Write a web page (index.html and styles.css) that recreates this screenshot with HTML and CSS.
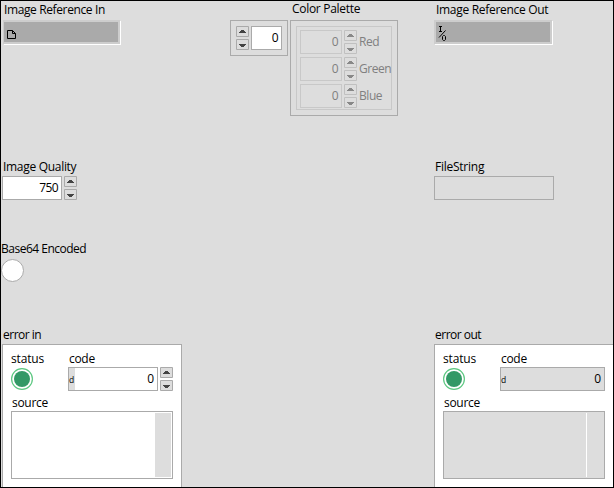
FILE: index.html
```
<!DOCTYPE html>
<html lang="en">
<head>
<meta charset="utf-8">
<title>Front Panel</title>
<link rel="stylesheet" href="styles.css">
</head>
<body>
<svg class="defs" width="0" height="0" aria-hidden="true">
  <symbol id="spin" viewBox="0 0 13 24">
    <path class="key" d="M.5 .5h12v10H.5zM.5 13.5h12v10H.5z"/>
    <path class="arrow" d="M5 4h3v1h1v1h1v1H3V6h1V5h1zM3 18h7v1H9v1H8v1H5v-1H4v-1H3z"/>
  </symbol>
  <symbol id="led" viewBox="0 0 22 22">
    <circle cx="11" cy="11" r="10.4" fill="#fff" stroke="#5cc780" stroke-width="1.2"/>
    <circle cx="11" cy="11" r="8" fill="#339966"/>
  </symbol>
</svg>
<main class="panel">
  <section class="col left">
    <div class="item ref">
      <div class="label l-in">Image Reference In</div>
      <div class="well in"><svg width="10" height="10" viewBox="0 0 10 10"><path d="M.5 .5h5l3 3v5h-8zM5.5 .5v3h3" fill="none" stroke="#000"/></svg></div>
    </div>
    <div class="item mid">
      <div class="label l-quality">Image Quality</div>
      <div class="spinner"><div class="num">750</div><svg class="keys" width="13" height="24"><use href="#spin"/></svg></div>
    </div>
    <div class="item bool">
      <div class="label l-base">Base64 Encoded</div>
      <div class="round"></div>
    </div>
    <div class="item err">
      <div class="label l-ein">error in</div>
      <div class="cluster">
        <div class="heads"><span class="h-status">status</span><span class="h-code">code</span></div>
        <div class="line">
          <svg class="led" width="22" height="22"><use href="#led"/></svg>
          <div class="code"><span class="radix">d</span><span>0</span></div>
          <svg class="keys" width="13" height="24"><use href="#spin"/></svg>
        </div>
        <div class="source-label">source</div>
        <div class="source"><div class="bar"></div></div>
      </div>
    </div>
  </section>
  <section class="col center">
    <div class="label l-palette">Color Palette</div>
    <div class="array">
      <div class="index"><svg class="keys" width="13" height="24"><use href="#spin"/></svg><div class="num">0</div></div>
      <div class="palette">
        <div class="channels">
          <div class="channel"><div class="num">0</div><svg class="keys" width="13" height="24"><use href="#spin"/></svg><span>Red</span></div>
          <div class="channel"><div class="num">0</div><svg class="keys" width="13" height="24"><use href="#spin"/></svg><span>Green</span></div>
          <div class="channel"><div class="num">0</div><svg class="keys" width="13" height="24"><use href="#spin"/></svg><span>Blue</span></div>
        </div>
      </div>
    </div>
  </section>
  <section class="col right">
    <div class="item ref">
      <div class="label l-out">Image Reference Out</div>
      <div class="well out"><svg width="9" height="16" viewBox="0 0 9 16"><path d="M1 .5h3M2.5 .5v5M1 5.5h3M7.5 4.5L1 11.5M5.5 9.5h1l1 1v3l-1 1h-1l-1-1v-3z" fill="none" stroke="#000"/></svg></div>
    </div>
    <div class="item mid">
      <div class="label l-file">FileString</div>
      <div class="string"></div>
    </div>
    <div class="item bool"></div>
    <div class="item err">
      <div class="label l-eout">error out</div>
      <div class="cluster">
        <div class="heads"><span class="h-status">status</span><span class="h-code">code</span></div>
        <div class="line">
          <svg class="led" width="22" height="22"><use href="#led"/></svg>
          <div class="code"><span class="radix">d</span><span>0</span></div>
        </div>
        <div class="source-label">source</div>
        <div class="source"><div class="bar"></div></div>
      </div>
    </div>
  </section>
</main>
</body>
</html>
```
FILE: styles.css
```
* { box-sizing: border-box; }
body { margin: 0; font: 12px/16px "Open Sans", "Noto Sans", sans-serif; color: #000; }
.defs { display: block; }
.panel {
  display: flex;
  width: 614px;
  height: 488px;
  border: 1px solid #000;
  background: #ddd;
  overflow: hidden;
}
.col { flex: none; height: 486px; }
.left { width: 229px; }
.center { width: 204px; }
.right { width: 179px; }
.label, .heads, .source-label, .channel span { white-space: nowrap; }
.label { height: 16px; letter-spacing: -.3px; }

.ref { height: 157px; padding-top: 1px; }
.mid { height: 82px; padding-top: 1px; }
.bool { height: 86px; padding-top: 1px; }
.err { height: 161px; padding-top: 1px; }

.l-in { margin-left: 3px; letter-spacing: -.38px; }
.l-quality { margin-left: 2px; }
.l-base { margin-left: 0; letter-spacing: -.5px; }
.l-ein { margin-left: 2px; }
.l-palette { margin-left: 62px; }
.l-out { margin-left: 2px; }
.l-file, .l-eout { margin-left: 1px; }
.l-file { letter-spacing: -.25px; }
.l-ein, .l-eout { letter-spacing: -.5px; }

.well {
  width: 117px;
  height: 24px;
  margin: 2px 0 0 2px;
  background: #aaa;
  border: solid #cdcdcd;
  border-width: 2px 2px 2px 1px;
  box-shadow: 1px 1px 0 #fff;
}
.well svg { display: block; margin: 8px 0 0 3px; }
.right .well { width: 118px; margin-left: 0; border-left-width: 2px; }
.right .well svg { margin: 4px 0 0 2px; }

.spinner { display: flex; gap: 2px; margin: 1px 0 0 1px; }
.num {
  flex: none;
  width: 60px;
  height: 24px;
  padding-right: 3px;
  border: 1px solid #aaa;
  background: #fff;
  text-align: right;
  line-height: 22px;
  letter-spacing: -.6px;
}
.keys { display: block; flex: none; }
.key { fill: #ddd; stroke: #aaa; }
.arrow { fill: #444; }
.string { width: 120px; height: 24px; margin-top: 1px; border: 1px solid #aaa; }
.round { width: 23px; height: 23px; margin-top: 2px; border: 1px solid #aaa; border-radius: 50%; background: #fff; }

.cluster {
  width: 180px;
  height: 150px;
  margin: 1px 0 0 1px;
  padding: 6px 8px 0;
  border: 1px solid #aaa;
  background: #fff;
}
.right .cluster { margin-left: 0; }
.heads { display: flex; height: 16px; letter-spacing: -.3px; }
.h-status { width: 58px; letter-spacing: -.15px; }
.line { display: flex; height: 24px; }
.led { display: block; margin: 1px 35px 0 0; flex: none; }
.code {
  display: flex;
  justify-content: space-between;
  width: 90px;
  height: 24px;
  margin-right: 2px;
  padding-right: 3px;
  border: 1px solid #aaa;
  line-height: 22px;
}
.radix { width: 6px; background: #ddd; font-size: 8.5px; line-height: 24px; }
.right .code { width: 105px; margin-right: 0; background: #ddd; }
.source-label { height: 20px; padding: 4px 0 0 1px; letter-spacing: -.3px; }
.source { display: flex; justify-content: flex-end; width: 162px; height: 68px; padding: 1px; border: 1px solid #aaa; }
.bar { width: 16px; background: #ddd; }
.right .source { background: #ddd; }
.right .bar { width: 17px; border-left: 1px solid #fff; }

.array { display: flex; gap: 2px; align-items: flex-start; margin-top: 3px; }
.index { display: flex; gap: 2px; width: 58px; height: 36px; padding: 5px; border: 1px solid #aaa; }
.index .num { width: 31px; }
.palette { width: 108px; height: 96px; padding: 5px; border: 1px solid #aaa; }
.channels { display: flex; flex-direction: column; gap: 3px; width: 96px; height: 84px; padding: 3px; border: 1px solid #c8c8c8; color: #808080; }
.channel { display: flex; gap: 2px; line-height: 24px; letter-spacing: -.45px; }
.channel .num { width: 42px; border-color: #c8c8c8; background: none; }
.channel .keys { opacity: .55; }
```
